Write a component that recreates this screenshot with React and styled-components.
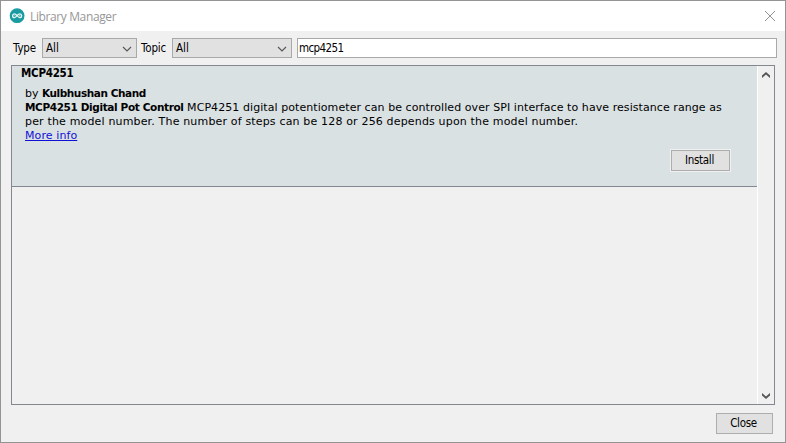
import React from "react";
import styled, { createGlobalStyle } from "styled-components";

const GlobalStyle = createGlobalStyle`
  * { box-sizing: border-box; }
  body { margin: 0; overflow: hidden; }
`;

const Window = styled.div`
  width: 786px;
  height: 443px;
  display: flex;
  flex-direction: column;
  background: #f0f0f0;
  border: 1px solid #929496;
  color: #000;
  font: 11.5px/15px "DejaVu Sans Condensed", "DejaVu Sans", sans-serif;
`;

const TitleBar = styled.header`
  height: 30px;
  flex: none;
  display: flex;
  align-items: center;
  padding: 0 9px 0 8px;
  background: #fff;
`;

const Title = styled.h1`
  flex: 1;
  margin: 1px 0 0 5px;
  color: #979797;
  font: 400 12px/16px "Open Sans", sans-serif;
  letter-spacing: -0.38px;
`;

const CloseIcon = styled.svg`
  width: 12px;
  height: 12px;
  margin-top: -1px;
`;

const Toolbar = styled.div`
  height: 34px;
  flex: none;
  display: flex;
  align-items: center;
  padding: 0 8px 0 12px;
`;

const Label = styled.label`
  width: ${(p) => p.$width}px;
  flex: none;
  padding-top: 1px;
  letter-spacing: -0.15px;
`;

const Select = styled.div`
  width: ${(p) => p.$width}px;
  height: 20px;
  flex: none;
  display: flex;
  align-items: center;
  justify-content: space-between;
  margin-right: ${(p) => p.$gap}px;
  padding: 1px 4px 0 3px;
  background: #e1e1e1;
  border: 1px solid #a9a9a9;
`;

const Search = styled.div`
  flex: 1;
  height: 20px;
  padding: 2px 1px;
  background: #fff;
  border: 1px solid #a9a9a9;
  letter-spacing: -0.6px;
`;

const List = styled.main`
  width: 764px;
  height: 340px;
  flex: none;
  display: flex;
  margin-left: 10px;
  border: 1px solid #828790;
`;

const Items = styled.div`
  flex: 1;
`;

const Card = styled.article`
  height: 121px;
  display: flex;
  flex-direction: column;
  padding-top: 1px;
  background: #dae1e3;
  border-bottom: 1px solid #828790;
  font: 11px/14px "DejaVu Sans", sans-serif;
`;

const CardTitle = styled.h2`
  height: 20px;
  margin: 0 0 0 9px;
  font: 700 11.5px/13px "DejaVu Sans Condensed", sans-serif;
  letter-spacing: -0.25px;
`;

const Line = styled.div`
  height: 14px;
  margin-left: 13px;
  white-space: pre;
  letter-spacing: ${(p) => p.$spacing || 0}px;
`;

const Strong = styled.strong`
  font-size: 10.5px;
  line-height: 1;
  font-weight: 700;
  letter-spacing: ${(p) => p.$spacing || 0}px;
`;

const Link = styled.a`
  color: #1010d8;
  text-decoration: underline;
`;

const Button = styled.button`
  width: ${(p) => p.$width}px;
  height: 21px;
  padding: 0 2px 1px 0;
  background: #e1e1e1;
  border: 1px solid #adadad;
  color: #000;
  font: 11.5px/15px "DejaVu Sans Condensed", "DejaVu Sans", sans-serif;
  letter-spacing: -0.3px;
  box-shadow: ${(p) => (p.$halo ? "0 0 0 1px #f0f0f0" : "none")};
`;

const CardActions = styled.div`
  display: flex;
  justify-content: flex-end;
  padding: 7px 27px 0 0;
`;

const Scrollbar = styled.div`
  width: 17px;
  display: flex;
  flex-direction: column;
  align-items: center;
  justify-content: space-between;
  padding: 6px 0 5px;
  background: #f0f0f0;
  border-left: 1px solid #fff;
`;

const Footer = styled.footer`
  display: flex;
  justify-content: flex-end;
  padding: 8px 12px 0 0;
`;

const Logo = () => (
  <svg width="16" height="16" viewBox="0 0 16 16">
    <circle cx="8.1" cy="7.7" r="7.4" fill="#1a9ba1" />
    <path
      d="M8.1 7.7C7 6.3 6.5 5.8 5.5 5.8a1.9 1.9 0 0 0 0 3.8c1 0 1.5-.5 2.6-1.9s1.6-1.9 2.6-1.9a1.9 1.9 0 0 1 0 3.8C9.7 9.6 9.2 9.1 8.1 7.7Z"
      fill="none"
      stroke="#e4f6f6"
      strokeWidth="1.3"
    />
    <path d="M4.8 7.7h1.4M10 7.7h1.4M10.7 7v1.4" stroke="#c5e9ea" strokeWidth=".6" />
  </svg>
);

const Chevron = () => (
  <svg width="10" height="6" viewBox="0 0 10 6">
    <path d="M1 1l4 4 4-4" fill="none" stroke="#555" strokeWidth="1.1" />
  </svg>
);

const ScrollArrow = ({ down }) => (
  <svg width="8" height="6" viewBox="0 0 8 6">
    <path
      d={down ? "M0 0L4 3.5 8 0V2.5L4 6 0 2.5Z" : "M0 6L4 2.5 8 6V3.5L4 0 0 3.5Z"}
      fill="#555"
    />
  </svg>
);

export default function App() {
  return (
    <>
      <GlobalStyle />
      <Window>
        <TitleBar>
          <Logo />
          <Title>Library Manager</Title>
          <CloseIcon viewBox="0 0 12 12">
            <path d="M1 1l10 10M11 1L1 11" stroke="#929292" />
          </CloseIcon>
        </TitleBar>
        <Toolbar>
          <Label $width={29}>Type</Label>
          <Select $width={95} $gap={4}>All<Chevron /></Select>
          <Label $width={31}>Topic</Label>
          <Select $width={120} $gap={5}>All<Chevron /></Select>
          <Search>mcp4251</Search>
        </Toolbar>
        <List>
          <Items>
            <Card>
              <CardTitle>MCP4251</CardTitle>
              <Line>by <Strong $spacing={-0.43}>Kulbhushan Chand</Strong></Line>
              <Line $spacing={0.07}>
                <Strong $spacing={-0.37}>MCP4251 Digital Pot Control</Strong>
                {" MCP4251 digital potentiometer can be controlled over SPI interface to have resistance range as"}
              </Line>
              <Line $spacing={0.165}>per the model number. The number of steps can be 128 or 256 depends upon the model number.</Line>
              <Line $spacing={0.1}><Link>More info</Link></Line>
              <CardActions>
                <Button $width={59} $halo>Install</Button>
              </CardActions>
            </Card>
          </Items>
          <Scrollbar>
            <ScrollArrow />
            <ScrollArrow down />
          </Scrollbar>
        </List>
        <Footer>
          <Button $width={57}>Close</Button>
        </Footer>
      </Window>
    </>
  );
}
